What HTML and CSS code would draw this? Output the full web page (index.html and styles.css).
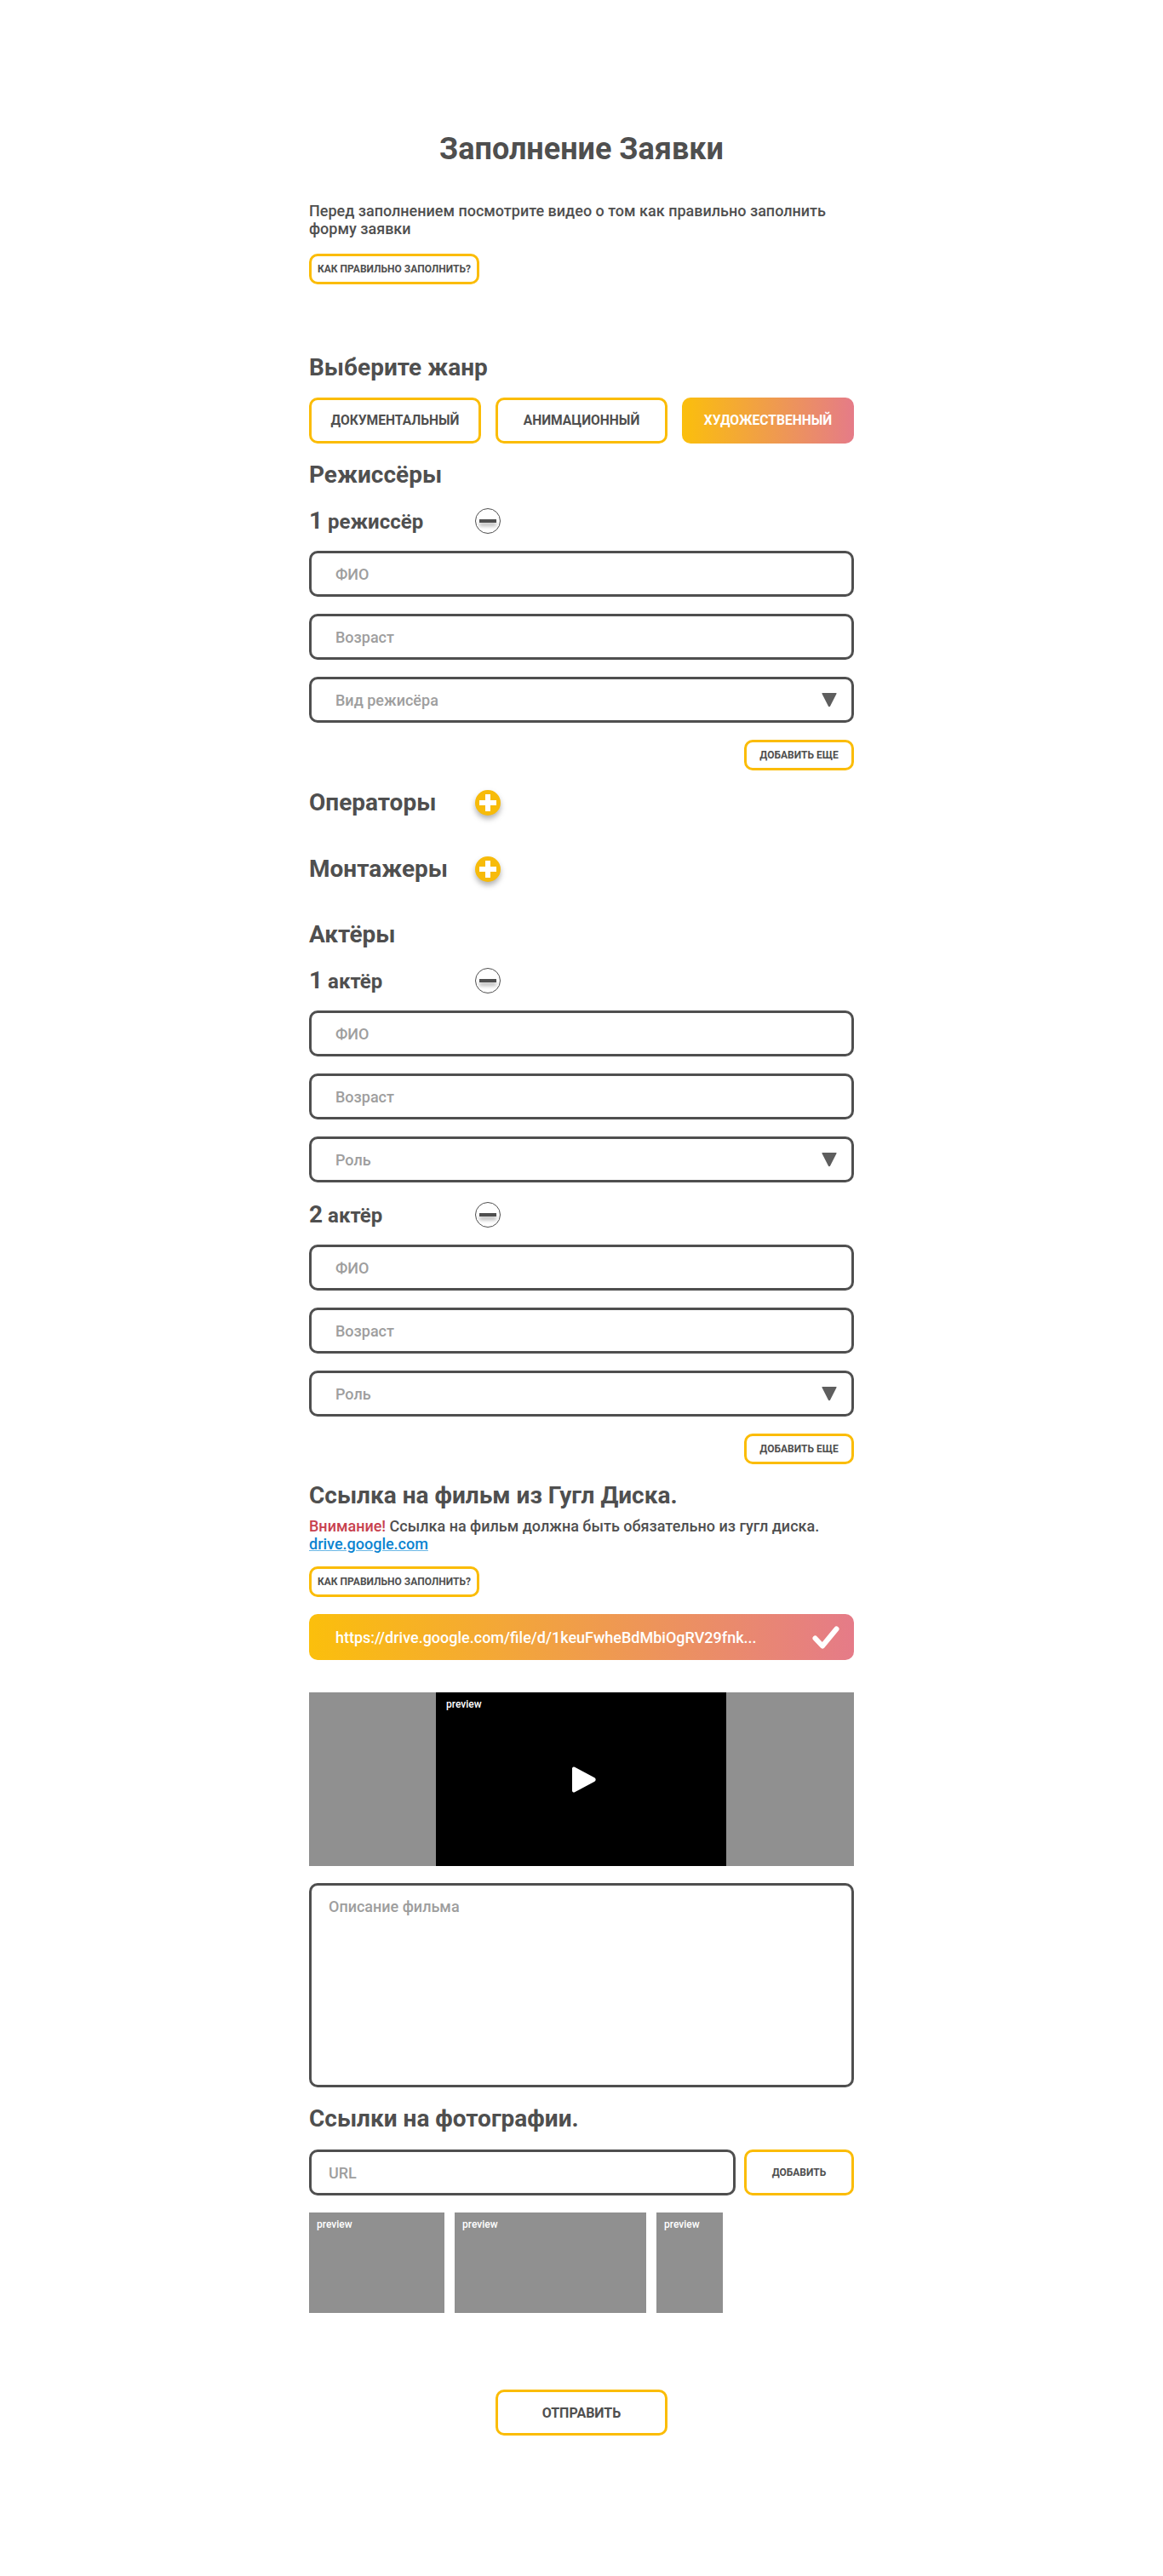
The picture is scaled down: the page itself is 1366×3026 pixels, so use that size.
FILE: index.html
```html
<!DOCTYPE html>
<html lang="ru">
<head>
    <meta charset="UTF-8">
    <meta name="viewport" content="width=device-width, initial-scale=1.0">
    <title>Заполнение Заявки</title>
    <link rel="stylesheet" href="styles.css">
</head>
<body>
    <main class="form-page">
        <h1 class="page-title">Заполнение Заявки</h1>
        <p class="lead">Перед заполнением посмотрите видео о том как правильно заполнить форму заявки</p>
        <button class="btn btn-small help-btn">Как правильно заполнить?</button>

        <h2 class="section-title genre-title">Выберите жанр</h2>
        <div class="genre-list">
            <button class="btn genre-btn">Документальный</button>
            <button class="btn genre-btn">Анимационный</button>
            <button class="btn genre-btn active">Художественный</button>
        </div>

        <h2 class="section-title directors-title">Режиссёры</h2>
        <div class="person-head">
            <h3 class="person-title"><span class="person-num">1</span> режиссёр</h3>
            <svg class="round-icon minus" viewBox="0 0 30 30"><circle cx="15" cy="15" r="14.5" fill="#fff" stroke="#4f4f4f"/><rect class="bar" x="5" y="13" width="20" height="4" fill="#4f4f4f"/></svg>
        </div>
        <div class="fields">
            <input class="field" type="text" placeholder="ФИО">
            <input class="field" type="text" placeholder="Возраст">
            <div class="field select">
                <span>Вид режисёра</span>
                <svg class="arrow" viewBox="0 0 18 18"><path d="M1 1h16a.6.6 0 0 1 .5.9l-7.4 14.6a1.2 1.2 0 0 1-2.2 0L.5 1.9A.6.6 0 0 1 1 1z" fill="#5e5e5e"/></svg>
            </div>
        </div>
        <div class="add-row">
            <button class="btn btn-small add-btn">Добавить еще</button>
        </div>

        <div class="group-head operators">
            <h2 class="section-title group-title">Операторы</h2>
            <svg class="round-icon plus" viewBox="0 0 30 30"><circle cx="15" cy="15" r="15" fill="#f7bb0a"/><path d="M12 5h6v7h7v6h-7v7h-6v-7H5v-6h7z" fill="#fff"/></svg>
        </div>
        <div class="group-head editors">
            <h2 class="section-title group-title">Монтажеры</h2>
            <svg class="round-icon plus" viewBox="0 0 30 30"><circle cx="15" cy="15" r="15" fill="#f7bb0a"/><path d="M12 5h6v7h7v6h-7v7h-6v-7H5v-6h7z" fill="#fff"/></svg>
        </div>

        <h2 class="section-title actors-title">Актёры</h2>
        <div class="person-head">
            <h3 class="person-title"><span class="person-num">1</span> актёр</h3>
            <svg class="round-icon minus" viewBox="0 0 30 30"><circle cx="15" cy="15" r="14.5" fill="#fff" stroke="#4f4f4f"/><rect class="bar" x="5" y="13" width="20" height="4" fill="#4f4f4f"/></svg>
        </div>
        <div class="fields">
            <input class="field" type="text" placeholder="ФИО">
            <input class="field" type="text" placeholder="Возраст">
            <div class="field select">
                <span>Роль</span>
                <svg class="arrow" viewBox="0 0 18 18"><path d="M1 1h16a.6.6 0 0 1 .5.9l-7.4 14.6a1.2 1.2 0 0 1-2.2 0L.5 1.9A.6.6 0 0 1 1 1z" fill="#5e5e5e"/></svg>
            </div>
        </div>
        <div class="person-head">
            <h3 class="person-title"><span class="person-num">2</span> актёр</h3>
            <svg class="round-icon minus" viewBox="0 0 30 30"><circle cx="15" cy="15" r="14.5" fill="#fff" stroke="#4f4f4f"/><rect class="bar" x="5" y="13" width="20" height="4" fill="#4f4f4f"/></svg>
        </div>
        <div class="fields">
            <input class="field" type="text" placeholder="ФИО">
            <input class="field" type="text" placeholder="Возраст">
            <div class="field select">
                <span>Роль</span>
                <svg class="arrow" viewBox="0 0 18 18"><path d="M1 1h16a.6.6 0 0 1 .5.9l-7.4 14.6a1.2 1.2 0 0 1-2.2 0L.5 1.9A.6.6 0 0 1 1 1z" fill="#5e5e5e"/></svg>
            </div>
        </div>
        <div class="add-row">
            <button class="btn btn-small add-btn">Добавить еще</button>
        </div>

        <h2 class="section-title link-title">Ссылка на фильм из Гугл Диска.</h2>
        <p class="notice"><span class="warn">Внимание!</span> Ссылка на фильм должна быть обязательно из гугл диска.<br><a class="drive-link" href="#">drive.google.com</a></p>
        <button class="btn btn-small help-btn notice-btn">Как правильно заполнить?</button>
        <div class="link-filled">
            <span class="link-text">https://drive.google.com/file/d/1keuFwheBdMbiOgRV29fnk...</span>
            <svg class="check" viewBox="0 0 32 27"><path d="M3.5 14.5l8.5 9L28.5 3.5" fill="none" stroke="#fff" stroke-width="6" stroke-linecap="round" stroke-linejoin="round"/></svg>
        </div>

        <div class="video">
            <div class="video-frame">
                <span class="preview-label">preview</span>
                <svg class="play" viewBox="0 0 28 31"><path d="M3 .8l23.4 12.4a2.7 2.7 0 0 1 0 4.6L3 30.2A2 2 0 0 1 0 28.500V2.500A2 2 0 0 1 3 .8z" fill="#fff"/></svg>
            </div>
        </div>

        <textarea class="field description" placeholder="Описание фильма"></textarea>

        <h2 class="section-title photos-title">Ссылки на фотографии.</h2>
        <div class="url-row">
            <input class="field url-field" type="text" placeholder="URL">
            <button class="btn btn-small url-btn">Добавить</button>
        </div>
        <div class="photos">
            <div class="photo photo-a"><span class="preview-label">preview</span></div>
            <div class="photo photo-b"><span class="preview-label">preview</span></div>
            <div class="photo photo-c"><span class="preview-label">preview</span></div>
        </div>

        <div class="submit-row">
            <button class="btn genre-btn submit-btn">Отправить</button>
        </div>
    </main>
</body>
</html>
```
FILE: styles.css
```css
* {
    margin: 0;
    padding: 0;
    box-sizing: border-box;
}

body {
    font-family: Roboto, sans-serif;
    background: #fff;
    color: #4f4f4f;
}

.form-page {
    width: 640px;
    margin: 0 auto;
    padding: 155px 0 165px;
}

.page-title {
    font-size: 36px;
    line-height: 40px;
    font-weight: 700;
    text-align: center;
}

.lead,
.notice {
    font-size: 18px;
    line-height: 21px;
    font-weight: 500;
}

.lead {
    margin-top: 42px;
}

.btn {
    display: block;
    background: #fff;
    border: 3px solid #fbbc05;
    border-radius: 10px;
    color: #4f4f4f;
    font-family: inherit;
    font-weight: 700;
    text-transform: uppercase;
}

.btn-small {
    height: 36px;
    font-size: 12px;
}

.help-btn {
    width: 200px;
    margin-top: 19px;
}

.section-title {
    font-size: 28px;
    line-height: 34px;
    font-weight: 700;
}

.genre-title {
    margin-top: 81px;
}

.genre-list {
    display: grid;
    grid-template-columns: repeat(3, 1fr);
    gap: 17px;
    margin-top: 18px;
}

.genre-btn {
    height: 54px;
    font-size: 16px;
}

.genre-list .genre-btn {
    font-size: 15.6px;
}

.genre-btn.active {
    border: none;
    background: linear-gradient(90deg, #fbbf0c 0%, #e57b88 100%);
    color: #fff;
}

.directors-title {
    margin-top: 20px;
}

.person-head,
.group-head {
    display: flex;
    align-items: center;
    height: 30px;
}

.person-head {
    margin-top: 23px;
}

.section-title + .person-head {
    margin-top: 22px;
}

.person-title {
    width: 195px;
    font-size: 24px;
    line-height: 30px;
    font-weight: 700;
}

.person-num {
    font-size: 28px;
}

.round-icon {
    flex: none;
    width: 30px;
    height: 30px;
    overflow: visible;
}

.round-icon.plus {
    filter: drop-shadow(0 4px 3px rgba(0, 0, 0, 0.3));
}

.round-icon.minus .bar {
    filter: drop-shadow(0 4px 2px rgba(0, 0, 0, 0.3));
}

.fields {
    display: flex;
    flex-direction: column;
    gap: 20px;
    margin-top: 20px;
}

.field {
    display: block;
    width: 100%;
    height: 54px;
    padding: 0 28px;
    background: #fff;
    border: 3px solid #4f4f4f;
    border-radius: 10px;
    color: #9e9e9e;
    font-family: inherit;
    font-size: 18px;
    font-weight: 500;
    outline: none;
}

.field::placeholder {
    color: #9e9e9e;
    opacity: 1;
}

.select {
    display: flex;
    align-items: center;
    justify-content: space-between;
    padding-right: 17px;
}

.arrow {
    width: 18px;
    height: 18px;
}

.add-row {
    display: flex;
    justify-content: flex-end;
    margin-top: 20px;
}

.add-btn {
    width: 129px;
}

.group-title {
    width: 195px;
}

.operators {
    margin-top: 23px;
}

.editors {
    margin-top: 48px;
}

.actors-title {
    margin-top: 45px;
}

.link-title {
    margin-top: 20px;
}

.notice {
    margin-top: 8px;
}

.warn {
    color: #c8414f;
}

.drive-link {
    color: #0b84d1;
    text-decoration: underline;
    text-decoration-color: #6cb8e6;
}

.notice-btn {
    margin-top: 16px;
}

.link-filled {
    display: flex;
    align-items: center;
    justify-content: space-between;
    height: 54px;
    margin-top: 20px;
    padding: 0 17px 0 31px;
    border-radius: 10px;
    background: linear-gradient(90deg, #fbbf0c 0%, #e57b88 100%);
    color: #fff;
    font-size: 18px;
    font-weight: 500;
}

.check {
    width: 32px;
    height: 27px;
}

.video {
    display: flex;
    justify-content: center;
    height: 204px;
    margin-top: 38px;
    background: #909090;
}

.video-frame {
    position: relative;
    display: flex;
    align-items: center;
    justify-content: center;
    width: 341px;
    margin-right: 1px;
    background: #000;
}

.play {
    width: 28px;
    height: 31px;
    margin-left: 7px;
}

.preview-label {
    position: absolute;
    top: 7px;
    left: 12px;
    color: #fff;
    font-size: 12px;
    line-height: 14px;
    font-weight: 500;
}

.description {
    height: 240px;
    margin-top: 20px;
    padding: 14px 20px;
    resize: none;
}

.photos-title {
    margin-top: 20px;
}

.url-row {
    display: flex;
    gap: 10px;
    margin-top: 19px;
}

.url-field {
    flex: 1;
    padding: 0 20px;
}

.url-btn {
    flex: none;
    width: 129px;
    height: 54px;
}

.photos {
    display: flex;
    gap: 12px;
    margin-top: 20px;
}

.photo {
    position: relative;
    height: 118px;
    background: #909090;
}

.photo .preview-label {
    left: 9px;
}

.photo-a {
    width: 159px;
}

.photo-b {
    width: 225px;
}

.photo-c {
    width: 78px;
}

.submit-row {
    display: flex;
    justify-content: center;
    margin-top: 90px;
}

.submit-btn {
    width: 202px;
}
```
